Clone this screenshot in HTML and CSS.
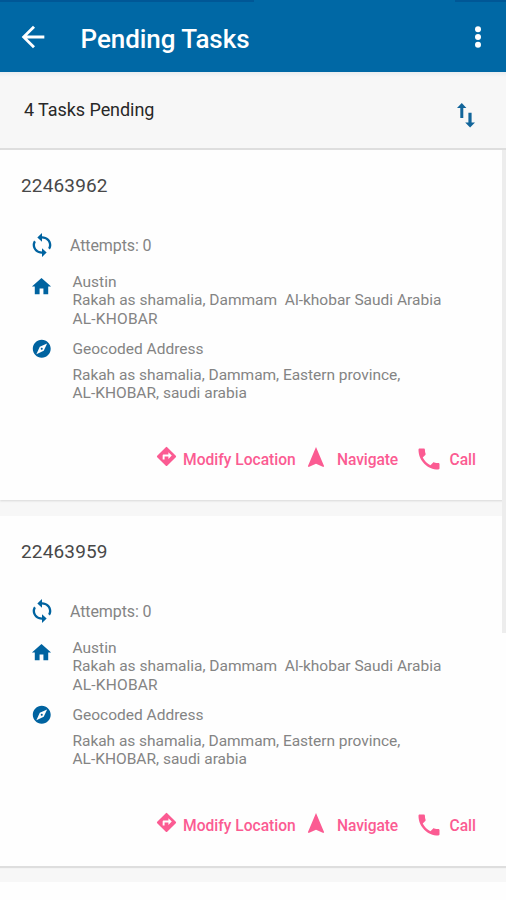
FILE: index.html
```html
<!DOCTYPE html>
<html lang="en">
<head>
<meta charset="utf-8">
<title>Pending Tasks</title>
<link rel="stylesheet" href="styles.css">
</head>
<body>
<svg class="defs" aria-hidden="true">
  <symbol id="sync" viewBox="0 0 24 24" preserveAspectRatio="none"><path d="M12 4V1L8 5l4 4V6c3.31 0 6 2.69 6 6 0 1.01-.25 1.97-.7 2.8l1.46 1.46C19.54 15.03 20 13.57 20 12c0-4.42-3.58-8-8-8zm0 14c-3.31 0-6-2.69-6-6 0-1.01.25-1.97.7-2.8L5.24 7.74C4.46 8.97 4 10.43 4 12c0 4.42 3.58 8 8 8v3l4-4-4-4v3z"/></symbol>
  <symbol id="home" viewBox="0 0 24 24"><path d="M10 20v-6h4v6h5v-8h3L12 3 2 12h3v8z"/></symbol>
  <symbol id="explore" viewBox="0 0 24 24"><path d="M12 10.9c-.61 0-1.1.49-1.1 1.1s.49 1.1 1.1 1.1c.61 0 1.1-.49 1.1-1.1s-.49-1.1-1.1-1.1zM12 2C6.48 2 2 6.48 2 12s4.48 10 10 10 10-4.48 10-10S17.52 2 12 2zm2.19 12.19L6 18l3.81-8.19L18 6l-3.81 8.19z"/></symbol>
  <symbol id="directions" viewBox="0 0 24 24"><path d="M21.71 11.29l-9-9a.996.996 0 0 0-1.41 0l-9 9a.996.996 0 0 0 0 1.41l9 9c.39.39 1.02.39 1.41 0l9-9a.996.996 0 0 0 0-1.41zM14 14.5V12h-4v3H8v-4c0-.55.45-1 1-1h5V7.5l3.5 3.5-3.5 3.5z"/></symbol>
  <symbol id="navigation" viewBox="0 0 24 24" preserveAspectRatio="none"><path d="M12 2L4.5 20.29l.71.71L12 18l6.79 3 .71-.71z"/></symbol>
  <symbol id="call" viewBox="0 0 24 24"><path d="M6.62 10.79c1.44 2.83 3.76 5.14 6.59 6.59l2.2-2.2c.27-.27.67-.36 1.02-.24 1.12.37 2.33.57 3.57.57.55 0 1 .45 1 1V20c0 .55-.45 1-1 1-9.39 0-17-7.61-17-17 0-.55.45-1 1-1h3.5c.55 0 1 .45 1 1 0 1.25.2 2.45.57 3.57.11.35.03.74-.25 1.02l-2.2 2.2z"/></symbol>
</svg>
<header class="appbar">
  <svg class="back" viewBox="0 0 24 24"><path d="M20 11H7.83l5.59-5.59L12 4l-8 8 8 8 1.41-1.41L7.83 13H20v-2z"/></svg>
  <h1 class="title">Pending Tasks</h1>
  <svg class="more" viewBox="0 0 8 24"><circle cx="4" cy="4.3" r="3"/><circle cx="4" cy="12" r="3"/><circle cx="4" cy="19.7" r="3"/></svg>
</header>
<section class="summary">
  <span class="count">4 Tasks Pending</span>
  <svg class="sort" viewBox="0 0 18 25"><path d="M4.8 0L0 5h3.3v10h3V5h3.1zM11.4 9.8v9.8H8.2l4.9 5 4.9-5h-3.4V9.8z"/></svg>
</section>
<main class="list">
  <article class="task">
    <h2 class="id">22463962</h2>
    <div class="row attempts"><svg class="icon sync"><use href="#sync"/></svg><span>Attempts: 0</span></div>
    <div class="row address"><svg class="icon home"><use href="#home"/></svg><p><span class="name">Austin</span><br><span class="street">Rakah as shamalia, Dammam&nbsp; Al-khobar Saudi Arabia</span><br><span class="city">AL-KHOBAR</span></p></div>
    <div class="row geo"><svg class="icon explore"><use href="#explore"/></svg><span>Geocoded Address</span></div>
    <p class="geotext"><span class="province">Rakah as shamalia, Dammam, Eastern province,</span><br><span class="country">AL-KHOBAR, saudi arabia</span></p>
    <div class="actions">
      <a class="action modify"><svg class="directions"><use href="#directions"/></svg><span>Modify Location</span></a>
      <a class="action nav"><svg class="navigation"><use href="#navigation"/></svg><span>Navigate</span></a>
      <a class="action phone"><svg class="call"><use href="#call"/></svg><span>Call</span></a>
    </div>
  </article>
  <article class="task">
    <h2 class="id">22463959</h2>
    <div class="row attempts"><svg class="icon sync"><use href="#sync"/></svg><span>Attempts: 0</span></div>
    <div class="row address"><svg class="icon home"><use href="#home"/></svg><p><span class="name">Austin</span><br><span class="street">Rakah as shamalia, Dammam&nbsp; Al-khobar Saudi Arabia</span><br><span class="city">AL-KHOBAR</span></p></div>
    <div class="row geo"><svg class="icon explore"><use href="#explore"/></svg><span>Geocoded Address</span></div>
    <p class="geotext"><span class="province">Rakah as shamalia, Dammam, Eastern province,</span><br><span class="country">AL-KHOBAR, saudi arabia</span></p>
    <div class="actions">
      <a class="action modify"><svg class="directions"><use href="#directions"/></svg><span>Modify Location</span></a>
      <a class="action nav"><svg class="navigation"><use href="#navigation"/></svg><span>Navigate</span></a>
      <a class="action phone"><svg class="call"><use href="#call"/></svg><span>Call</span></a>
    </div>
  </article>
  <div class="scrollbar"></div>
</main>
</body>
</html>
```
FILE: styles.css
```css
* { box-sizing: border-box; }
body { margin: 0; height: 900px; overflow: hidden; background: #fefefe; font-family: Roboto, sans-serif; color: #848484; }
h1, h2, p { margin: 0; font-weight: 400; }
svg { display: block; flex: none; fill: currentColor; }
.defs { position: absolute; width: 0; height: 0; }

.appbar { display: flex; align-items: center; height: 72px; padding: 2px 24px 0 16px; color: #fff; background: linear-gradient(90deg, #005796 0 254px, #0068a5 254px 455px, #005796 455px) 0 0 / 100% 2px no-repeat #0068a5; }
.back { width: 34px; height: 34px; }
.title { flex: 1; margin-left: 30.5px; padding-top: 3px; font-size: 26px; font-weight: 500; line-height: 32px; letter-spacing: -0.05px; }
.more { width: 8px; height: 24px; }

.summary { display: flex; justify-content: space-between; height: 78px; padding: 0 31.5px 0 24px; background: linear-gradient(#e9edf0, #f7f7f7 5px); border-bottom: 2px solid #dedede; }
.count { padding-top: 26px; color: #282828; font-size: 18px; line-height: 24px; letter-spacing: -0.06px; }
.sort { width: 18px; height: 25px; margin-top: 30.5px; color: #12659a; }

.list { position: relative; height: 732px; background: #f7f7f7; }
.task { height: 350px; padding: 23px 0 0; margin-bottom: 16px; background: #fefefe; box-shadow: 0 1px 2px #d8d8d8; }
.task + .task { box-shadow: 0 2px 1px #dedede; }
.id { margin-left: 21px; height: 25px; color: #484848; font-size: 19px; line-height: 25px; letter-spacing: 0.15px; }
.row { display: flex; }
.icon { color: #0063a0; }
.attempts { height: 28px; margin: 33px 0 0 28px; align-items: center; font-size: 16px; letter-spacing: -0.1px; }
.sync { width: 28px; height: 26px; margin-right: 14px; }
.address { margin: 14px 0 0 30px; font-size: 15.5px; line-height: 18.3px; }
.home { width: 23px; height: 23px; margin: 2px 19.5px 0 0; }
.city { letter-spacing: 0.2px; }
.geo { align-items: center; height: 22px; margin: 10px 0 0 31px; font-size: 15.5px; }
.explore { width: 21.5px; height: 21.5px; margin-right: 20px; }
.geotext { height: 36px; margin: 6px 0 0 72.5px; font-size: 15.5px; line-height: 18.5px; }
.province { letter-spacing: -0.04px; }
.actions { display: flex; height: 30px; margin: 43px 0 0 155px; color: #fb5b92; font-size: 15.6px; font-weight: 500; }
.action { display: flex; }
.action span { padding-top: 5px; line-height: 20px; }
.modify { width: 148px; }
.nav { width: 112px; }
.nav span { letter-spacing: -0.1px; }
.directions { width: 23px; height: 23px; margin: 0 5px 0 0; }
.navigation { width: 26px; height: 25px; margin-right: 8px; }
.call { width: 28px; height: 28px; margin-right: 6.5px; }
.scrollbar { position: absolute; top: 0; right: 0; width: 4px; height: 483px; background: #ededed; }
```
